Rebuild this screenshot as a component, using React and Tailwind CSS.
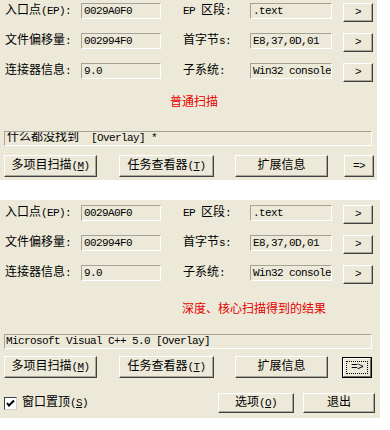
import React from 'react';

// ASCII parts render half-width, as in the bitmap UI font
function A({ children }) {
  return <span className="text-[11px] tracking-[-0.6px]">{children}</span>;
}

function Field({ value, w }) {
  return (
    <div className={`h-[16px] ${w} border border-t-[#a7a394] border-l-[#a7a394] border-b-white border-r-white pl-[2px] text-[11px] tracking-[-0.6px] leading-[14px] whitespace-pre overflow-hidden`}>
      {value}
    </div>
  );
}

function Btn({ children, className = '' }) {
  return (
    <div className={`flex items-center justify-center border border-t-white border-l-white border-b-[#404040] border-r-[#404040] shadow-[inset_-1px_-1px_0_#aca899] leading-none whitespace-nowrap ${className}`}>
      {children}
    </div>
  );
}

function FocusBtn({ children, className = '' }) {
  return (
    <div className={`border border-black ${className}`}>
      <div className="h-full w-full p-[2px] border border-t-white border-l-white border-b-[#716f64] border-r-[#716f64]">
        <div className="h-full w-full flex items-center justify-center border border-dotted border-black leading-none">
          {children}
        </div>
      </div>
    </div>
  );
}

function Row({ l1, v1, l2, v2 }) {
  return (
    <div className="flex items-start h-[19px]">
      <div className="w-[81px] pl-[5px] h-[16px] leading-[16px] whitespace-nowrap">{l1}</div>
      <Field value={v1} w="w-[80px]" />
      <div className="ml-[22px] w-[67px] h-[16px] leading-[16px] whitespace-nowrap">{l2}</div>
      <Field value={v2} w="w-[82px]" />
      <Btn className="ml-[11px] w-[30px] h-[19px]"><A>&gt;</A></Btn>
    </div>
  );
}

function Rows() {
  return (
    <div className="flex flex-col gap-[11px]">
      <Row l1={<>入口点<A>(EP):</A></>} v1="0029A0F0" l2={<><A>EP </A>区段<A>:</A></>} v2=".text" />
      <Row l1={<>文件偏移量<A>:</A></>} v1="002994F0" l2={<>首字节<A>s:</A></>} v2="E8,37,0D,01" />
      <Row l1={<>连接器信息<A>:</A></>} v1="9.0" l2={<>子系统<A>:</A></>} v2="Win32 console" />
    </div>
  );
}

function Status({ children, className = '' }) {
  return (
    <div className={`ml-[4px] w-[368px] h-[15px] border border-t-[#a7a394] border-l-[#a7a394] border-b-white border-r-white pl-[1px] leading-[13px] whitespace-pre overflow-hidden ${className}`}>
      {children}
    </div>
  );
}

function ButtonRow({ focused }) {
  return (
    <div className="flex h-[22px]">
      <Btn className="ml-[4px] w-[93px]">多项目扫描<A>(<u>M</u>)</A></Btn>
      <Btn className="ml-[22px] w-[95px]">任务查看器<A>(<u>T</u>)</A></Btn>
      <Btn className="ml-[21px] w-[93px]">扩展信息</Btn>
      {focused ? (
        <FocusBtn className="ml-[14px] w-[30px] h-[21px] mt-[1px]"><A>=&gt;</A></FocusBtn>
      ) : (
        <Btn className="ml-[16px] w-[30px]"><A>=&gt;</A></Btn>
      )}
    </div>
  );
}

export default function App() {
  return (
    <div className="w-[390px] h-[430px] bg-white text-black text-[12px] font-['Liberation_Mono','Noto_Sans_CJK_SC',monospace]">
      {/* normal scan */}
      <div className="w-[377px] h-[180px] bg-[#ece9d8] pt-[3px]">
        <Rows />
        <div className="mt-[13px] h-[16px] leading-[16px] pl-[170px] text-[#e60000]">普通扫描</div>
        <Status className="mt-[20px]">
          <span className="pl-[1px]">什么都没找到</span><A>  [Overlay] *</A>
        </Status>
        <div className="mt-[9px]">
          <ButtonRow />
        </div>
      </div>

      {/* deep / core scan */}
      <div className="mt-[20px] w-[380px] h-[218px] bg-[#ece9d8] pt-[5px]">
        <Rows />
        <div className="mt-[18px] h-[16px] leading-[16px] pl-[182px] text-[#e60000]">深度、核心扫描得到的结果</div>
        <Status className="mt-[16px]">
          <A>Microsoft Visual C++ 5.0 [Overlay]</A>
        </Status>
        <div className="mt-[7px]">
          <ButtonRow focused />
        </div>
        <div className="mt-[15px] flex items-center h-[20px]">
          <div className="ml-[4px] w-[13px] h-[13px] bg-white border border-t-[#404040] border-l-[#404040] border-b-[#d4d0c8] border-r-[#d4d0c8] flex items-center justify-center">
            <svg width="9" height="9" viewBox="0 0 9 9">
              <path d="M1 4 L3 6.5 L8 1.5" stroke="black" strokeWidth="2" fill="none" />
            </svg>
          </div>
          <div className="ml-[5px] leading-[16px] whitespace-nowrap">窗口置顶<A>(<u>S</u>)</A></div>
          <Btn className="ml-[130px] w-[76px] h-[20px]">选项<A>(<u>O</u>)</A></Btn>
          <Btn className="ml-[9px] w-[72px] h-[20px]">退出</Btn>
        </div>
      </div>
    </div>
  );
}
